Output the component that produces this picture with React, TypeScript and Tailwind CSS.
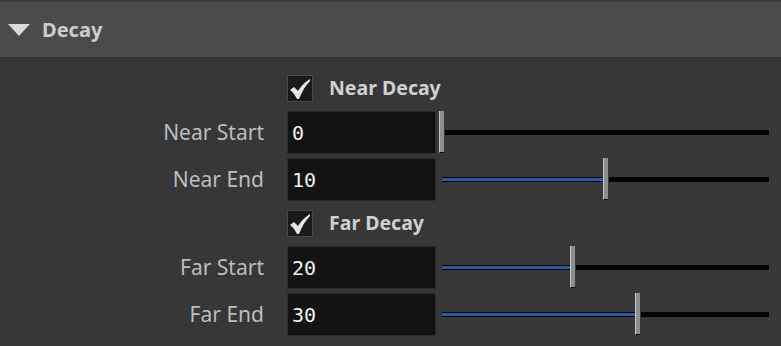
import React from "react";

const font = { fontFamily: '"Noto Sans", "Open Sans", sans-serif' };

type SliderRowProps = { label: string; value: number; max: number };

const SliderRow = ({ label, value, max }: SliderRowProps) => {
  const pct = (value / max) * 100;
  return (
    <div className="flex items-center h-[43px]">
      <div className="w-[264px] text-right text-[21px] text-[#bdbdbd] leading-none">{label}</div>
      <div className="ml-[23px] w-[149px] h-[43px] border border-[#2b2b2b] bg-[#131313] flex items-center pl-[4px]">
        <span className="text-[20px] text-[#f0f0f0] leading-none" style={{ fontFamily: '"DejaVu Sans Mono", monospace' }}>
          {value}
        </span>
      </div>
      <div className="relative ml-[6px] w-[327px] h-[43px] flex items-center">
        <div className="w-full h-[5px] bg-black rounded-[1px] relative">
          <div className="absolute left-0 top-[1px] h-[3px] bg-[#1f5eab]" style={{ width: `${pct}%` }} />
        </div>
        <div
          className="absolute top-0 w-[6px] h-[42px] bg-[#8e8e8e] border-l border-l-[#c4c4c4] border-r border-r-[#3a3a3a] border-b border-b-[#111]"
          style={{ left: `calc(${pct}% - 3px)` }}
        />
      </div>
    </div>
  );
};

const CheckRow = ({ label }: { label: string }) => (
  <div className="flex items-center h-[27px]">
    <div className="w-[287px]" />
    <div className="w-[26px] h-[27px] bg-[#1a1a1a] border border-[#474747] flex items-center justify-center">
      <svg width="22" height="22" viewBox="0 0 22 22">
        <path d="M1 12 L5 9 L9 13 C12 8 16 4 21 1 L21 3 C17 7 13 13 10 21 L8 21 C6 17 4 14 1 12 Z" fill="#e6e6e6" />
      </svg>
    </div>
    <div className="ml-[16px] text-[19.5px] font-bold text-[#d0d0d0] leading-none pb-[2px]">{label}</div>
  </div>
);

export default function App() {
  return (
    <div className="w-[781px] h-[346px] bg-[#373737] overflow-hidden" style={font}>
      <div className="h-[2px] bg-[#3b3b3b]" />
      <div className="h-[55px] bg-[#4b4b4b] flex items-center">
        <svg width="22" height="12" viewBox="0 0 22 12" className="ml-[8px] mt-[1px]">
          <path d="M0 0 L22 0 L11 12 Z" fill="#d9d9d9" />
        </svg>
        <span className="ml-[12px] mt-[2px] text-[20px] font-bold text-[#cdcdcd] leading-none pb-[2px]">Decay</span>
      </div>
      <div className="flex flex-col pt-[18px]">
        <CheckRow label="Near Decay" />
        <div className="h-[9px]" />
        <SliderRow label="Near Start" value={0} max={20} />
        <div className="h-[4px]" />
        <SliderRow label="Near End" value={10} max={20} />
        <div className="h-[9px]" />
        <CheckRow label="Far Decay" />
        <div className="h-[9px]" />
        <SliderRow label="Far Start" value={20} max={50} />
        <div className="h-[4px]" />
        <SliderRow label="Far End" value={30} max={50} />
      </div>
    </div>
  );
}
